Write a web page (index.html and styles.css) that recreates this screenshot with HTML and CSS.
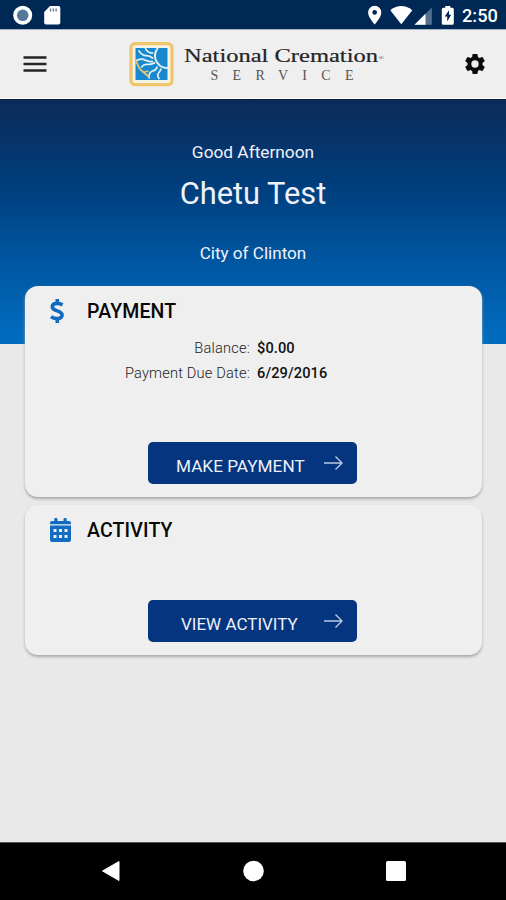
FILE: index.html
```html
<!DOCTYPE html>
<html lang="en">
<head>
<meta charset="utf-8">
<title>National Cremation Service</title>
<link rel="stylesheet" href="styles.css">
</head>
<body>
<div class="status">
  <svg class="status-left" width="64" height="29" viewBox="0 0 64 29">
    <circle cx="22.7" cy="15.3" r="9.5" fill="#fff"/>
    <circle cx="22.7" cy="15.3" r="5.8" fill="#54799d"/>
    <path d="M50 6h8.500q1.800 0 1.800 1.800v15q0 1.800-1.800 1.800H46q-1.800 0-1.800-1.800V12z" fill="#fff"/>
    <path d="M50.500 8.500v3M53.300 8.500v3M56.100 8.500v3" stroke="#617293" stroke-width="1.300"/>
  </svg>
  <div class="status-right">
    <svg width="90" height="29" viewBox="366 0 90 29">
      <path d="M374.700 5.800a6.600 6.600 0 0 0-6.600 6.600c0 4.900 6.600 12 6.600 12s6.600-7.100 6.600-12a6.600 6.600 0 0 0-6.600-6.600z" fill="#fff"/>
      <circle cx="374.700" cy="12.400" r="2.300" fill="#002855"/>
      <path d="M390.300 10.200q11-8.300 22 0L401.300 24.300z" fill="#fff"/>
      <path d="M431.800 7.500v17.200H414.500z" fill="#54708f"/>
      <path d="M425.500 13.800v10.900H414.500z" fill="#fff"/>
      <path d="M445.300 6h5v1.800h2q1.500 0 1.500 1.500v14q0 1.500-1.500 1.500h-9q-1.500 0-1.500-1.500v-14q0-1.500 1.500-1.500h2z" fill="#fff"/>
      <path d="M449 10.300l-4.300 6.300h2.500v4.800l4-6.600h-2.200z" fill="#002855"/>
    </svg>
    <span class="clock">2:50</span>
  </div>
</div>
<header class="bar">
  <svg width="24" height="18" viewBox="0 0 24 18"><path d="M.5 2.500h23M.5 9h23M.5 15.500h23" stroke="#252525" stroke-width="2.500"/></svg>
  <svg class="logo" width="260" height="48" viewBox="128 40 260 48">
    <rect x="131" y="43.700" width="41" height="41" rx="4" fill="#f5f2e6" stroke="#efc56b" stroke-width="3.200"/>
    <rect x="135.500" y="48" width="32" height="32" fill="#1989cf"/>
    <g fill="none" stroke="#e6f1f6" stroke-linecap="round">
      <path d="M157.500 48.500c-4 5-3 11 0 14.500 2.500 3.500 6 5 9.700 5" stroke-width="2"/>
      <path d="M145.500 48.500q2 4.300 7 4.700M139 51q3.500 5 7.500 4.700 3.500 0 6 2.300M136.500 60.500q5.500-2.500 8.500-.5 3.500 2 7.500 1.500M141.500 67q3-3.500 6-2.500 4 0 7-1.500M149 78q-.5-5.500 3.500-7 4-1 4.500-4M159 78.500q-2.500-3.500 0-6 1.500-1.500 1.800-3.500" stroke-width="1.700"/>
    </g>
    <path d="M135.700 61q2.300 4 4 8l9.300 8M142.500 72.500l6-1.500" fill="none" stroke="#e4c675" stroke-width="1.700"/>
    <text class="brand" x="184" y="61.500" textLength="194" lengthAdjust="spacingAndGlyphs">National Cremation</text>
    <text class="registered" x="378.500" y="59.500">®</text>
    <text class="service" x="210.500" y="79.500" textLength="143">SERVICE</text>
  </svg>
  <svg width="20" height="20" viewBox="2 2 20 20"><path fill="#090909" fill-rule="evenodd" d="M19.430 12.980c.04-.32.070-.64.070-.98s-.03-.66-.07-.98l2.110-1.650c.19-.15.240-.42.120-.64l-2-3.460c-.12-.22-.39-.3-.61-.22l-2.490 1c-.52-.4-1.080-.73-1.690-.98l-.38-2.650A.488.488 0 0 0 14 2h-4c-.25 0-.46.180-.49.420l-.38 2.650c-.61.250-1.170.590-1.690.980l-2.490-1c-.23-.09-.49 0-.61.220l-2 3.460c-.13.220-.07.490.120.640l2.110 1.650c-.04.320-.07.650-.07.980s.03.660.070.980l-2.110 1.650c-.19.150-.24.420-.12.640l2 3.460c.12.220.390.300.610.220l2.490-1c.52.400 1.080.730 1.690.980l.380 2.650c.03.240.240.420.490.420h4c.25 0 .46-.18.490-.42l.380-2.650c.61-.25 1.170-.59 1.690-.98l2.490 1c.23.090.490 0 .610-.22l2-3.460c.12-.22.070-.49-.12-.64zM12 15.700a3.700 3.700 0 1 1 0-7.400 3.700 3.700 0 0 1 0 7.400z"/></svg>
</header>
<section class="hero">
  <p class="greeting">Good Afternoon</p>
  <h1>Chetu Test</h1>
  <p class="city">City of Clinton</p>
</section>
<main>
  <section class="card payment">
    <div class="heading">
      <svg width="38" height="26" viewBox="0 0 38 26"><path d="M8.300 1v4M8.300 21v4M13.600 6.900Q11 5.400 8 5.400c-3.300 0-4.700 1.300-4.700 3.300 0 5.200 9.800 3.100 9.800 8.300 0 2.300-2 3.600-5.100 3.600-2.500 0-4.500-.8-6-2" fill="none" stroke="#116bc0" stroke-width="3.600"/></svg>
      <h2>PAYMENT</h2>
    </div>
    <dl>
      <dt>Balance:</dt><dd class="amount">$0.00</dd>
      <dt>Payment Due Date:</dt><dd>6/29/2016</dd>
    </dl>
    <button><span>MAKE PAYMENT</span><svg width="21" height="16" viewBox="0 0 21 16"><path d="M1 8h18M12.500 1.500L19 8l-6.500 6.500" fill="none" stroke="#b7c9e4" stroke-width="1.400"/></svg></button>
  </section>
  <section class="card activity">
    <div class="heading">
      <svg width="38" height="26" viewBox="0 0 38 26">
        <path fill="#116bc0" d="M1 7.300V6q0-2 2-2h2.300V2q0-1 1.100-1h1q1.100 0 1.100 1v2h6V2q0-1 1.100-1h1q1.100 0 1.100 1v2H20q2 0 2 2v1.300zM1 8.500h21v14.300q0 2.200-2.200 2.200H3.200Q1 25 1 22.800z"/>
        <path fill="#ededed" d="M4.500 12h3v3h-3zM10 12h3v3h-3zM15.500 12h3v3h-3zM4.500 18h3v3h-3zM10 18h3v3h-3zM15.500 18h3v3h-3z"/>
      </svg>
      <h2>ACTIVITY</h2>
    </div>
    <button><span>VIEW ACTIVITY</span><svg width="21" height="16" viewBox="0 0 21 16"><path d="M1 8h18M12.500 1.500L19 8l-6.500 6.500" fill="none" stroke="#b7c9e4" stroke-width="1.400"/></svg></button>
  </section>
</main>
<nav>
  <svg width="20" height="22" viewBox="0 0 20 22"><path d="M1.500 11L18 1.500v19z" fill="#fff" stroke="#fff" stroke-linejoin="round"/></svg>
  <svg width="22" height="22" viewBox="0 0 22 22"><circle cx="10.500" cy="11" r="10.300" fill="#fff"/></svg>
  <svg width="20" height="20" viewBox="0 0 20 20"><rect width="20" height="20" rx="1.500" fill="#fff"/></svg>
</nav>
</body>
</html>
```

FILE: styles.css
```css
* { box-sizing: border-box; }
body { margin: 0; height: 900px; display: flex; flex-direction: column; overflow: hidden; background: #e9e9e9; font-family: Roboto, sans-serif; color: #111; }
svg { display: block; flex: none; }
p, h1, h2, dl, dd { margin: 0; }
.status { height: 29px; flex: none; background: #002855; display: flex; justify-content: space-between; color: #fff; }
.status-right { display: flex; width: 140px; }
.clock { font-size: 18.2px; font-weight: 500; line-height: 32px; margin-left: 6px; white-space: nowrap; }
.bar { height: 70px; flex: none; background: #efefef; border-top: 1px solid #a5b0c0; border-bottom: 1px solid #fff; padding: 0 21px 0 23px; display: flex; align-items: center; }
.logo { margin-left: 81px; margin-right: 77px; }
.brand { font: 19px "Liberation Serif", serif; fill: #242424; stroke: #242424; stroke-width: .2px; }
.registered { font: 7px "Liberation Serif", serif; fill: #555; }
.service { font: 14px "Liberation Serif", serif; fill: #555; }
.hero { height: 245px; flex: none; background: linear-gradient(#0c2b59, #003e7c 35%, #0057a2 67%, #006dc1); border-top: 1px solid #061c40; color: #f0f2fb; text-align: center; padding-top: 40px; }
.greeting, .city { font-size: 17.3px; line-height: 24px; }
h1 { font-size: 30.8px; font-weight: 400; line-height: 38px; margin-top: 11px; }
.city { font-size: 17.1px; margin-top: 28px; }
main { flex: 1; margin-top: -58px; padding: 0 24px 0 25px; display: flex; flex-direction: column; gap: 8px; }
.card { background: #efefef; border-radius: 13px; box-shadow: 0 2px 3px #aaa; display: flex; flex-direction: column; align-items: center; padding: 12px 26px 13px 24px; }
.payment { height: 211px; }
.activity { height: 150px; }
.heading { width: 100%; display: flex; align-items: center; height: 26px; }
h2 { font-size: 19.5px; font-weight: 500; line-height: 26px; padding-top: 2px; letter-spacing: .15px; color: #080808; }
dl { width: 100%; display: grid; grid-template-columns: 201px 1fr; column-gap: 7px; line-height: 25px; font-size: 14.6px; margin-top: 12px; }
dt { text-align: right; color: #222; font-weight: 300; letter-spacing: .2px; }
dd { font-weight: 500; letter-spacing: .1px; }
button { width: 209px; height: 42px; margin-top: auto; border: 0; border-radius: 5px; background: #05357f; color: #edf1fc; font: 17.2px Roboto, sans-serif; display: flex; align-items: center; padding: 0 13px 0 28px; justify-content: space-between; }
button span { line-height: 24px; padding-top: 6px; white-space: nowrap; }
.activity button span { margin-left: 5px; font-size: 17px; }
nav { height: 58px; flex: none; background: #000; border-top: 1px solid #555; display: flex; align-items: center; justify-content: space-between; padding: 0 100px 2px 101px; }
```
